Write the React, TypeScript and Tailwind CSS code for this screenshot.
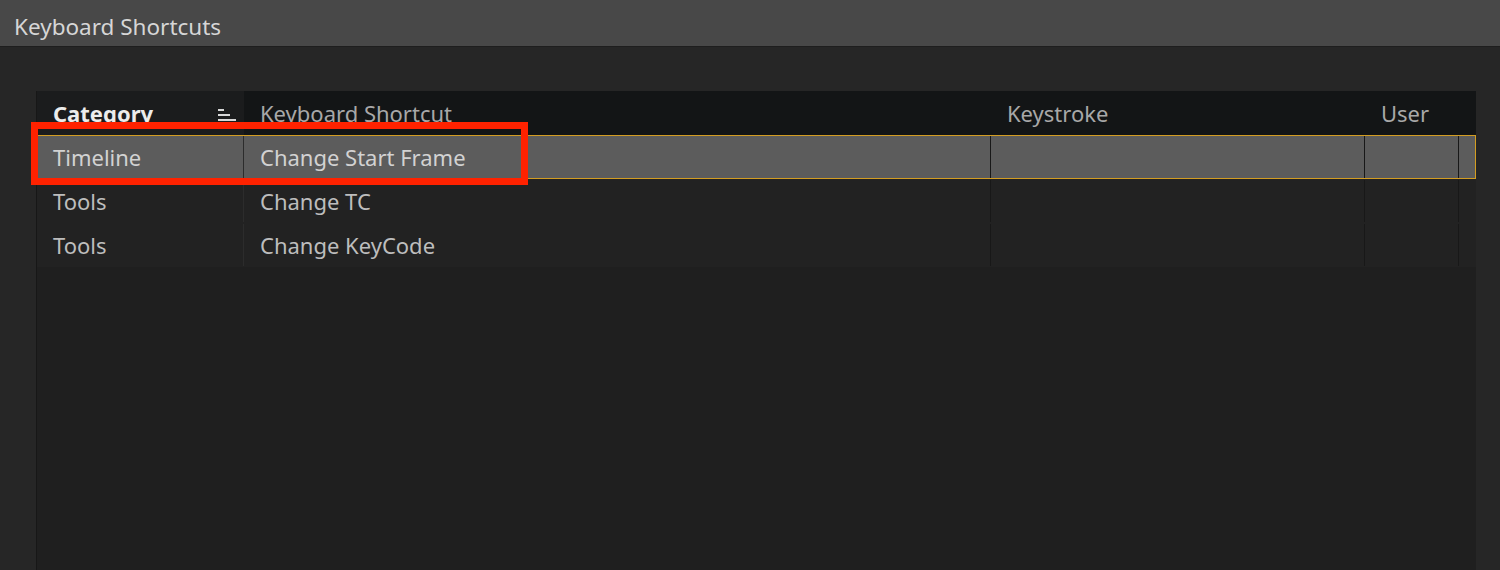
import React from "react";

const rows = [
    { category: "Timeline", shortcut: "Change Start Frame", selected: true },
    { category: "Tools", shortcut: "Change TC", selected: false },
    { category: "Tools", shortcut: "Change KeyCode", selected: false },
];

function SortIcon() {
    return (
        <svg width="18" height="14" viewBox="0 0 18 14" className="shrink-0 mt-[4px]">
            <rect x="0" y="1" width="6" height="2" fill="#d8d8d8" />
            <rect x="0" y="6" width="12" height="2" fill="#d8d8d8" />
            <rect x="0" y="11" width="18" height="2" fill="#d8d8d8" />
        </svg>
    );
}

export default function App() {
    return (
        <div
            className="relative w-[1500px] h-[570px] overflow-hidden bg-[#262626] flex flex-col"
            style={{ fontFamily: '"Noto Sans", "Open Sans", sans-serif' }}
        >
            {/* Title bar */}
            <div className="h-[47px] shrink-0 bg-[#484848] border-b border-[#1e1e1e] flex items-center px-[14px] pt-[7px]">
                <span className="text-[22.5px] text-[#d6d6d6]">Keyboard Shortcuts</span>
            </div>

            {/* Table panel */}
            <div className="flex-1 pt-[44px] pl-[36px] pr-[24px]">
                <div className="h-full bg-[#1f1f1f] border-l border-[#171717] flex flex-col">
                    {/* Header */}
                    <div className="h-[44px] flex bg-[#131516] text-[22px]">
                        <div className="w-[207px] bg-[#1b1c1d] flex items-center justify-between pl-[16px] pr-[8px]">
                            <span className="font-bold text-[#ececec] mt-[1px]">Category</span>
                            <SortIcon />
                        </div>
                        <div className="w-[747px] flex items-center pl-[16px] text-[#a8a8a8]">Keyboard Shortcut</div>
                        <div className="w-[374px] flex items-center pl-[16px] text-[#a8a8a8]">Keystroke</div>
                        <div className="w-[94px] flex items-center pl-[16px] text-[#a8a8a8]">User</div>
                        <div className="flex-1" />
                    </div>

                    {/* Rows */}
                    {rows.map((row, i) => (
                        <div
                            key={i}
                            className={
                                row.selected
                                    ? "h-[44px] flex text-[22px] bg-[#5c5c5c] border border-[#d39d22] text-[#d2d2d2]"
                                    : "h-[44px] flex text-[22px] bg-[#222222] border border-transparent text-[#bdbdbd]"
                            }
                        >
                            <div className="w-[207px] -ml-px flex items-center pl-[16px] border-r border-[#2c2c2c]">
                                {row.category}
                            </div>
                            <div className="w-[747px] flex items-center pl-[16px] border-r border-[#181818]">
                                {row.shortcut}
                            </div>
                            <div className="w-[374px] border-r border-[#181818]" />
                            <div className="w-[94px] border-r border-[#181818]" />
                            <div className="flex-1" />
                        </div>
                    ))}
                </div>
            </div>

            {/* Annotation */}
            <div className="absolute left-[31px] top-[122px] w-[497px] h-[63px] border-[7px] border-[#ff2200]" />
        </div>
    );
}
